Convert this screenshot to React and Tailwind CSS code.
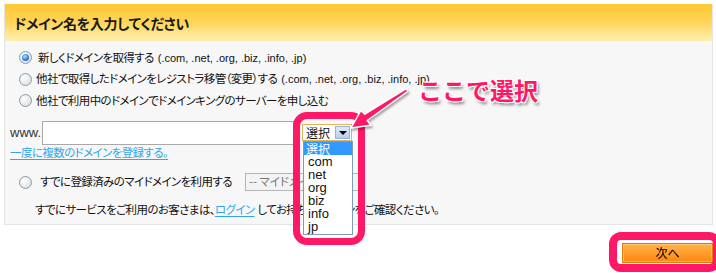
import React from "react";

function Radio({ checked }) {
  return (
    <span className="relative flex items-center justify-center w-[13px] h-[13px] shrink-0 rounded-full border border-[#8c9aa6] bg-[radial-gradient(circle_at_35%_35%,#ffffff,#d3d8de)]">
      {checked && (
        <span className="w-[7px] h-[7px] rounded-full bg-[radial-gradient(circle_at_40%_35%,#a6dcff,#1c6fc8_70%,#0b4f9a)]" />
      )}
    </span>
  );
}

const latin = "ml-[4px] font-['Liberation_Sans',Arial,sans-serif] text-[11px] tracking-normal";
const jp = "text-[11.5px] tracking-[-0.6px] leading-none";

export default function App() {
  return (
    <div className="relative w-[716px] h-[273px] bg-white overflow-hidden font-['Noto_Sans_CJK_JP',sans-serif] text-[12px] text-[#111] [font-feature-settings:'palt']">
      <div className="pt-[4px] pl-[4px]">
        <div className="w-[709px] border border-[#e4e4e4] border-t-0">
          {/* header */}
          <div className="h-[37px] flex items-center pl-[9px] bg-linear-to-b from-[#ffc832] via-[#ffd558] to-[#ffefae]">
            <span className="text-[14px] font-bold text-[#1a1a1a] tracking-[-0.3px] leading-none">
              ドメイン名を入力してください
            </span>
          </div>
          {/* body */}
          <div className="h-[183px] bg-[#f7f7f7] pt-[6px] pl-[5px]">
            <div className="pl-[9px]">
              <div className="h-[21.5px] flex items-center gap-[6px]">
                <Radio checked />
                <span className={jp}>
                  新しくドメインを取得する<span className={latin}>(.com, .net, .org, .biz, .info, .jp)</span>
                </span>
              </div>
              <div className="h-[21.5px] flex items-center gap-[4px]">
                <Radio />
                <span className={jp}>
                  他社で取得したドメインをレジストラ移管（変更）する<span className={latin}>(.com, .net, .org, .biz, .info, .jp)</span>
                </span>
              </div>
              <div className="h-[21.5px] flex items-center gap-[4px]">
                <Radio />
                <span className={jp}>他社で利用中のドメインでドメインキングのサーバーを申し込む</span>
              </div>
            </div>

            {/* www row */}
            <div className="mt-[9px] h-[24px] flex items-center">
              <span className="font-['Liberation_Sans',Arial,sans-serif] text-[13px] text-[#333] leading-none">www.</span>
              <div className="ml-[1px] w-[252px] h-[24px] bg-white border border-[#a9a9a9]" />
              <div className="ml-[8px] w-[50px] h-[17px] flex items-stretch bg-white border border-[#e2b45c]">
                <span className="flex-1 flex items-center pl-[3px] text-[12px] leading-none">選択</span>
                <span className="w-[15px] my-[1px] mr-[1px] flex items-center justify-center bg-linear-to-b from-[#dfeafa] to-[#b5cfef] border border-[#97b3dc]">
                  <span className="w-0 h-0 border-l-[4px] border-r-[4px] border-t-[4px] border-l-transparent border-r-transparent border-t-black" />
                </span>
              </div>
            </div>

            {/* link */}
            <div className="mt-[1px] h-[14px] flex items-center">
              <span className={`${jp} text-[#33a7e6] underline underline-offset-2`}>一度に複数のドメインを登録する。</span>
            </div>

            {/* my domain row */}
            <div className="mt-[12.5px] h-[20px] flex items-center pl-[9px]">
              <Radio />
              <span className={`ml-[8px] ${jp}`}>すでに登録済みのマイドメインを利用する</span>
              <div className="ml-[13px] w-[118px] h-[18px] flex items-center pl-[3px] bg-[#f3f3f3] border border-[#b5b5b5] text-[#777] text-[11.5px] leading-none">
                -- マイドメイン --
              </div>
            </div>

            {/* login text */}
            <div className="mt-[10px] h-[16px] flex items-center pl-[25px]">
              <span className={jp}>
                すでにサービスをご利用のお客さまは、<span className="text-[#33a7e6] underline underline-offset-2">ログイン</span><span className="ml-[3px]">してお持ちのドメインをご確認ください。</span>
              </span>
            </div>
          </div>
        </div>

        {/* button */}
        <div className="w-[709px] mt-[18px] flex justify-end">
          <div className="w-[91px] h-[20px] border border-[#e27a0c] bg-linear-to-b from-[#ffb546] to-[#ff8500] flex items-center justify-center">
            <div className="w-full h-full border border-[#ffc980]/70 flex items-center justify-center text-[12px] text-black leading-none">
              次へ
            </div>
          </div>
        </div>
      </div>

      {/* dropdown list (open) */}
      <div className="absolute left-[303px] top-[141px] w-[50px] h-[94px] bg-white border border-[#7f9db9] flex flex-col font-['Liberation_Sans',Arial,sans-serif] text-[13px] leading-none">
        <div className="h-[13px] flex items-center pl-[2px] bg-[#3399ff] text-white font-['Noto_Sans_CJK_JP',sans-serif] text-[12px]">選択</div>
        <div className="h-[13px] flex items-center pl-[4px]">com</div>
        <div className="h-[13px] flex items-center pl-[4px]">net</div>
        <div className="h-[13px] flex items-center pl-[4px]">org</div>
        <div className="h-[13px] flex items-center pl-[4px]">biz</div>
        <div className="h-[13px] flex items-center pl-[4px]">info</div>
        <div className="h-[13px] flex items-center pl-[4px]">jp</div>
      </div>

      {/* pink highlight boxes */}
      <div className="absolute left-[293px] top-[112px] w-[72px] h-[133px] border-[7px] border-[#fe1866] rounded-[14px]" />
      <div className="absolute left-[609px] top-[232px] w-[112px] h-[40px] border-[8px] border-[#fe1866] rounded-[12px]" />

      {/* arrow */}
      <svg
        className="absolute left-[340px] top-[80px] [filter:drop-shadow(1px_2px_1px_rgba(0,0,0,0.35))]"
        width="80"
        height="60"
        viewBox="0 0 80 60"
      >
        <path
          d="M11 48 L20.9 30.5 L24.8 34.2 L66.2 8.7 L67.8 11.3 L27.2 40.5 L31 45.3 Z"
          fill="#fe1866"
          stroke="#ffffff"
          strokeWidth="1.5"
          strokeLinejoin="round"
        />
      </svg>

      {/* callout */}
      <div className="absolute left-[418px] top-[78px] text-[24px] font-bold leading-none text-[#fe1866] [font-feature-settings:normal] [text-shadow:-1px_-1px_0_#fff,1px_-1px_0_#fff,-1px_1px_0_#fff,1px_1px_0_#fff,2px_3px_3px_rgba(0,0,0,0.45)]">
        ここで選択
      </div>
    </div>
  );
}
